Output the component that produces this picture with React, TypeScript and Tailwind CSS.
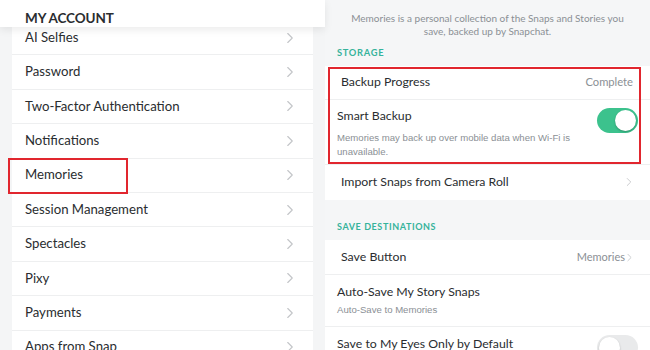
import { ChevronRight } from "lucide-react"

const accountItems = [
    "AI Selfies",
    "Password",
    "Two-Factor Authentication",
    "Notifications",
    "Memories",
    "Session Management",
    "Spectacles",
    "Pixy",
    "Payments",
    "Apps from Snap",
]

const font = "font-['Lato','Noto_Sans',sans-serif]"
const subFont = "font-['Liberation_Sans',Arial,sans-serif]"

const Toggle = ({ on }: { on: boolean }) => (
    <div className={`flex h-[25px] w-[41px] shrink-0 items-center rounded-full p-[2px] ${on ? 'justify-end bg-[#3cc28d]' : 'justify-start bg-[#e9eaeb]'}`}>
        <div className="h-[21px] w-[21px] rounded-full bg-white shadow-[0_1px_2px_rgba(0,0,0,0.25)]" />
    </div>
)

const App = () => {
    return <div className={`flex h-[350px] w-[650px] overflow-hidden text-[#2a2d30] ${font}`}>
        {/* left: account list */}
        <div className="flex w-[325px] shrink-0 flex-col bg-[#f4f5f6]">
            <div className="relative z-10 flex h-[27px] shrink-0 items-end bg-white pb-[2px] pl-[25px] shadow-[0_3px_8px_rgba(0,0,0,0.08)]">
                <span className="text-[13.5px] font-bold leading-none tracking-[-0.1px]">MY ACCOUNT</span>
            </div>
            <div className="mx-[12px] -mt-[6px] flex flex-col bg-white">
                {accountItems.map((item) => (
                    <div key={item} className="relative flex h-[34.4px] shrink-0 items-center justify-between border-b border-[#eeeff0] pl-[13px] pr-[14px]">
                        <span className="text-[13.2px]">{item}</span>
                        <ChevronRight className="h-[18px] w-[18px] text-[#c3c5c8]" strokeWidth={1.5} />
                        {item === "Memories" && (
                            <span className="pointer-events-none absolute -left-[4px] -top-[1px] h-[36px] w-[120px] border-2 border-[#e1262e]" />
                        )}
                    </div>
                ))}
            </div>
        </div>

        {/* right: memories settings */}
        <div className="flex flex-1 flex-col bg-[#f5f6f7]">
            <p className="mx-auto mt-[12px] w-[280px] text-center text-[10px] leading-[13px] text-[#8b9095]">
                Memories is a personal collection of the Snaps and Stories you save, backed up by Snapchat.
            </p>
            <div className="mt-[8px] pl-[12px] text-[9.3px] font-bold tracking-[0.7px] text-[#36b39b]">STORAGE</div>
            <div className="mt-[6px] flex flex-col bg-white">
                <div className="relative flex flex-col">
                    <div className="flex h-[34px] items-center justify-between border-b border-[#eeeff0] pl-[16px] pr-[17px]">
                        <span className="text-[12.3px]">Backup Progress</span>
                        <span className="text-[11.2px] text-[#8b9095]">Complete</span>
                    </div>
                    <div className="flex h-[65px] border-b border-[#eeeff0] pl-[12px] pr-[12px] pt-[8px]">
                        <div className="flex flex-1 flex-col">
                            <span className="text-[12.3px] leading-[16px]">Smart Backup</span>
                            <span className={`mt-[7px] w-[240px] text-[9.6px] leading-[14px] text-[#8b9095] ${subFont}`}>
                                Memories may back up over mobile data when Wi-Fi is unavailable.
                            </span>
                        </div>
                        <Toggle on />
                    </div>
                    <span className="pointer-events-none absolute bottom-[1px] left-[3px] right-[9px] top-[1px] border-2 border-[#e1262e]" />
                </div>
                <div className="flex h-[35px] items-center justify-between pl-[16px] pr-[14px]">
                    <span className="text-[12.3px]">Import Snaps from Camera Roll</span>
                    <ChevronRight className="h-[14px] w-[14px] text-[#c3c5c8]" strokeWidth={1.5} />
                </div>
            </div>
            <div className="mt-[20px] pl-[12px] text-[9px] font-bold tracking-[0.6px] text-[#36b39b]">SAVE DESTINATIONS</div>
            <div className="mt-[7px] flex flex-col bg-white">
                <div className="flex h-[35px] items-center justify-between border-b border-[#eeeff0] pl-[16px] pr-[14px]">
                    <span className="text-[12.3px]">Save Button</span>
                    <span className="flex items-center text-[11px] text-[#8b9095]">
                        Memories
                        <ChevronRight className="-ml-[2px] h-[13px] w-[13px] text-[#c3c5c8]" strokeWidth={1.5} />
                    </span>
                </div>
                <div className="flex h-[52px] flex-col border-b border-[#eeeff0] pl-[12px] pt-[9px]">
                    <span className="text-[12.3px] leading-[16px]">Auto-Save My Story Snaps</span>
                    <span className={`mt-[3px] text-[9.6px] leading-[13px] text-[#8b9095] ${subFont}`}>Auto-Save to Memories</span>
                </div>
                <div className="flex h-[40px] items-start justify-between pl-[12px] pr-[12px] pt-[9px]">
                    <span className="text-[12.3px] leading-[16px]">Save to My Eyes Only by Default</span>
                    <div className="-mt-[1px]"><Toggle on={false} /></div>
                </div>
            </div>
        </div>
    </div>
}

export default App
